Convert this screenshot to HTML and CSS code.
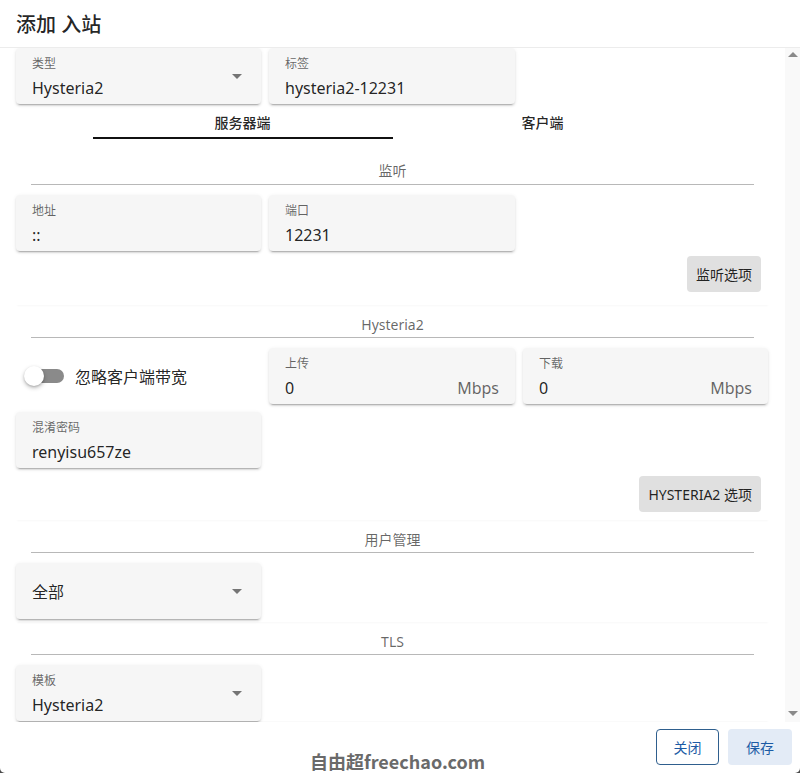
FILE: index.html
```html
<!DOCTYPE html>
<html lang="zh-CN">
<head>
    <meta charset="UTF-8">
    <meta name="viewport" content="width=device-width, initial-scale=1.0">
    <title>添加 入站</title>
    <link rel="stylesheet" href="styles.css">
</head>
<body>
    <div class="dialog">
        <div class="dialog-title">添加 入站</div>

        <div class="dialog-body">
            <div class="scroll">
                <div class="row row-top">
                    <div class="field">
                        <div class="field-main">
                            <div class="field-label">类型</div>
                            <div class="field-value">Hysteria2</div>
                        </div>
                        <span class="caret"></span>
                    </div>
                    <div class="field">
                        <div class="field-main">
                            <div class="field-label">标签</div>
                            <div class="field-value">hysteria2-12231</div>
                        </div>
                    </div>
                </div>

                <div class="tabs">
                    <div class="tab active">服务器端</div>
                    <div class="tab">客户端</div>
                </div>

                <!-- 监听 -->
                <div class="card card-listen">
                    <div class="card-title">监听</div>
                    <div class="row">
                        <div class="field">
                            <div class="field-main">
                                <div class="field-label">地址</div>
                                <div class="field-value">::</div>
                            </div>
                        </div>
                        <div class="field">
                            <div class="field-main">
                                <div class="field-label">端口</div>
                                <div class="field-value">12231</div>
                            </div>
                        </div>
                    </div>
                    <div class="actions actions-listen">
                        <button class="btn">监听选项</button>
                    </div>
                </div>

                <!-- Hysteria2 -->
                <div class="card card-hy">
                    <div class="card-title">Hysteria2</div>
                    <div class="row">
                        <div class="switch-cell">
                            <span class="switch"><span class="switch-thumb"></span></span>
                            <span class="switch-label">忽略客户端带宽</span>
                        </div>
                        <div class="field">
                            <div class="field-main">
                                <div class="field-label">上传</div>
                                <div class="field-value with-suffix">0<span class="suffix">Mbps</span></div>
                            </div>
                        </div>
                        <div class="field">
                            <div class="field-main">
                                <div class="field-label">下载</div>
                                <div class="field-value with-suffix">0<span class="suffix">Mbps</span></div>
                            </div>
                        </div>
                        <div class="field">
                            <div class="field-main">
                                <div class="field-label">混淆密码</div>
                                <div class="field-value">renyisu657ze</div>
                            </div>
                        </div>
                    </div>
                    <div class="actions actions-hy">
                        <button class="btn">HYSTERIA2 选项</button>
                    </div>
                </div>

                <!-- 用户管理 -->
                <div class="card card-user">
                    <div class="card-title">用户管理</div>
                    <div class="row">
                        <div class="field">
                            <div class="field-main">
                                <div class="field-value only">全部</div>
                            </div>
                            <span class="caret"></span>
                        </div>
                    </div>
                </div>

                <!-- TLS -->
                <div class="card">
                    <div class="card-title">TLS</div>
                    <div class="row">
                        <div class="field">
                            <div class="field-main">
                                <div class="field-label">模板</div>
                                <div class="field-value">Hysteria2</div>
                            </div>
                            <span class="caret"></span>
                        </div>
                    </div>
                </div>
            </div>

            <div class="scrollbar">
                <span class="arrow arrow-up"></span>
                <span class="arrow arrow-down"></span>
            </div>
        </div>

        <div class="dialog-actions">
            <button class="btn-outline">关闭</button>
            <button class="btn-tonal">保存</button>
        </div>

        <div class="watermark">自由超freechao.com</div>
    </div>
</body>
</html>
```

FILE: styles.css
```css
body {
    margin: 0;
    padding: 0;
    background-color: #4a4a4a;
    font-family: "Noto Sans", "Noto Sans CJK SC", sans-serif;
    color: rgba(0, 0, 0, 0.87);
}

.dialog {
    position: relative;
    width: 800px;
    height: 773px;
    background-color: #fff;
    border-radius: 0 0 5px 5px;
    display: flex;
    flex-direction: column;
    overflow: hidden;
}

.dialog-title {
    height: 47px;
    padding: 0 16px;
    display: flex;
    align-items: center;
    font-size: 20px;
    font-weight: 500;
    border-bottom: 1px solid #ececec;
}

.dialog-body {
    height: 674px;
    display: flex;
}

.scroll {
    width: 785px;
    overflow: hidden;
}

.scrollbar {
    width: 15px;
    background-color: #f9f9f9;
    display: flex;
    flex-direction: column;
    justify-content: space-between;
    align-items: center;
    padding: 4px 0 6px;
    box-sizing: border-box;
}

.arrow {
    width: 0;
    height: 0;
    border-left: 5px solid transparent;
    border-right: 5px solid transparent;
}

.arrow-up {
    border-bottom: 5px solid #8a8a8a;
}

.arrow-down {
    border-top: 5px solid #8a8a8a;
}

/* fields */

.row {
    display: grid;
    grid-template-columns: 245px 246px 245px;
    gap: 8px;
}

.row-top {
    margin: 0 16px;
}

.field {
    height: 56px;
    background-color: #f6f6f6;
    border-radius: 4px;
    box-shadow: 0 3px 1px -2px rgba(0, 0, 0, 0.2), 0 2px 2px 0 rgba(0, 0, 0, 0.1), 0 1px 4px 0 rgba(0, 0, 0, 0.08);
    display: flex;
    align-items: center;
    padding: 0 16px;
    box-sizing: border-box;
}

.field-main {
    flex: 1;
    align-self: stretch;
    padding-top: 8px;
}

.field-label {
    font-size: 12px;
    line-height: 16px;
    color: rgba(0, 0, 0, 0.6);
}

.field-value {
    font-size: 16px;
    line-height: 24px;
    margin-top: 4px;
}

.field-value.only {
    margin-top: 9px;
}

.with-suffix {
    display: flex;
    justify-content: space-between;
}

.suffix {
    color: rgba(0, 0, 0, 0.6);
}

.caret {
    width: 0;
    height: 0;
    margin-right: 3px;
    border-left: 5px solid transparent;
    border-right: 5px solid transparent;
    border-top: 5px solid #757575;
}

/* tabs */

.tabs {
    width: 600px;
    margin: 0 auto;
    display: flex;
}

.tab {
    flex: 1;
    height: 30px;
    padding-top: 3px;
    border-bottom: 2px solid transparent;
    display: flex;
    align-items: center;
    justify-content: center;
    font-size: 14px;
    font-weight: 500;
}

.tab.active {
    border-bottom-color: #111;
}

/* sections */

.card {
    margin: 0 16px;
    box-shadow: 0 2px 2px -1px rgba(0, 0, 0, 0.03);
}

.card-listen {
    margin-top: 12px;
}

.card-user {
    padding-bottom: 3px;
}

.card-title {
    margin: 0 15px 10px;
    padding: 10px 0 2px;
    border-bottom: 1px solid #b8b8b8;
    text-align: center;
    font-size: 14px;
    line-height: 20px;
    color: rgba(0, 0, 0, 0.6);
}

.card-listen .card-title {
    padding-bottom: 3px;
}

.switch-cell {
    display: flex;
    align-items: center;
    padding-left: 8px;
}

.switch {
    position: relative;
    width: 34px;
    height: 14px;
    margin-left: 6px;
    border-radius: 7px;
    background-color: #8a8a8a;
}

.switch-thumb {
    position: absolute;
    left: -6px;
    top: -3px;
    width: 20px;
    height: 20px;
    border-radius: 50%;
    background-color: #fff;
    box-shadow: 0 2px 4px rgba(0, 0, 0, 0.25), 0 1px 2px rgba(0, 0, 0, 0.15);
}

.switch-label {
    margin-left: 11px;
    font-size: 16px;
}

.actions {
    display: flex;
    justify-content: flex-end;
    padding-right: 8px;
}

.actions-listen {
    margin-top: 5px;
    padding-bottom: 13px;
}

.actions-hy {
    margin-top: 8px;
    padding-bottom: 8px;
}

.btn {
    height: 36px;
    padding: 0 9px;
    border: none;
    border-radius: 4px;
    background-color: #e0e0e0;
    color: rgba(0, 0, 0, 0.87);
    font-family: inherit;
    font-size: 14px;
    cursor: pointer;
}

/* footer */

.dialog-actions {
    flex: 1;
    display: flex;
    justify-content: flex-end;
    align-items: flex-start;
    gap: 9px;
    padding: 7px 8px 0;
}

.btn-outline, .btn-tonal {
    height: 36px;
    min-width: 64px;
    padding: 0 16px;
    border-radius: 4px;
    font-family: inherit;
    font-size: 14px;
    color: #1c5ba5;
    cursor: pointer;
}

.btn-outline {
    background-color: #fff;
    border: 1px solid #2f5f8e;
    min-width: 63px;
}

.btn-tonal {
    background-color: #e3ebf6;
    border: none;
}

.watermark {
    position: absolute;
    left: 310px;
    top: 752px;
    font-family: "Noto Sans CJK SC", sans-serif;
    font-size: 18px;
    line-height: 18px;
    font-weight: 700;
    color: #6a6a6a;
    white-space: nowrap;
}
```
